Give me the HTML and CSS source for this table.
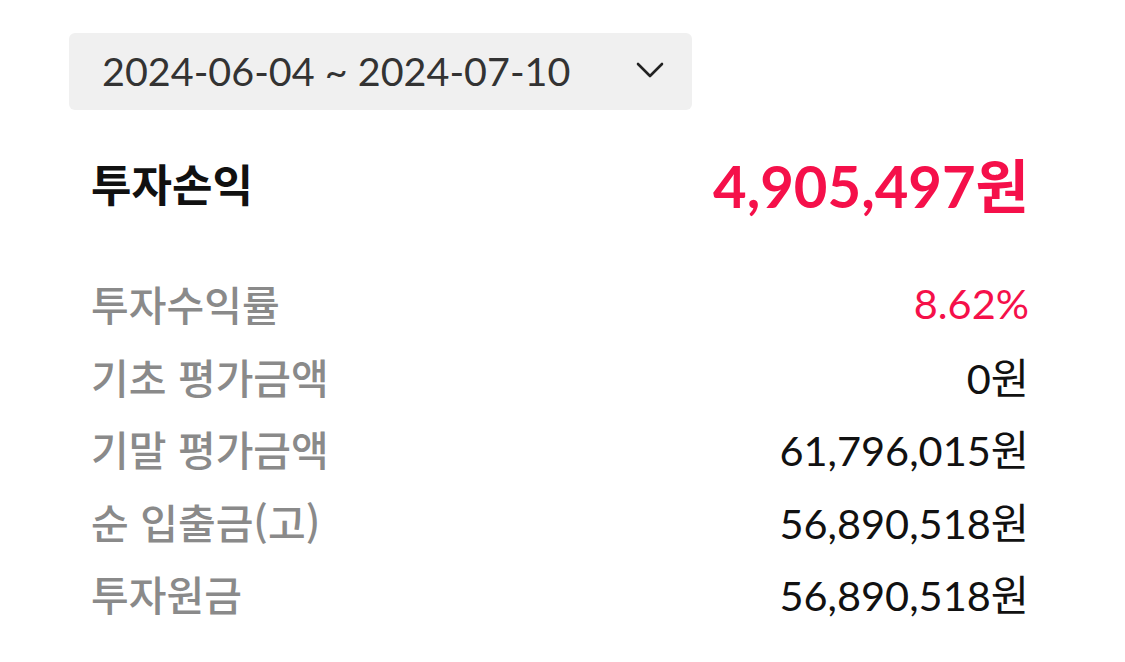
FILE: index.html
```html
<!DOCTYPE html>
<html lang="ko">
<head>
    <meta charset="UTF-8">
    <meta name="viewport" content="width=device-width, initial-scale=1.0">
    <title>투자손익</title>
    <link rel="stylesheet" href="styles.css">
</head>
<body>
    <div class="container">
        <div class="period-select">
            <span class="period-text">2024-06-04 ~ 2024-07-10</span>
            <svg class="chevron" width="28" height="16" viewBox="0 0 28 16">
                <polyline points="2,2 14,14 26,2" fill="none" stroke="#222" stroke-width="2.6" stroke-linecap="round" stroke-linejoin="round"/>
            </svg>
        </div>

        <div class="summary">
            <div class="total-row">
                <span class="total-label">투자손익</span>
                <span class="total-value">4,905,497원</span>
            </div>

            <div class="detail-list">
                <div class="detail-row">
                    <span class="detail-label">투자수익률</span>
                    <span class="detail-value up">8.62%</span>
                </div>
                <div class="detail-row">
                    <span class="detail-label">기초 평가금액</span>
                    <span class="detail-value">0원</span>
                </div>
                <div class="detail-row">
                    <span class="detail-label">기말 평가금액</span>
                    <span class="detail-value">61,796,015원</span>
                </div>
                <div class="detail-row">
                    <span class="detail-label">순 입출금(고)</span>
                    <span class="detail-value">56,890,518원</span>
                </div>
                <div class="detail-row">
                    <span class="detail-label">투자원금</span>
                    <span class="detail-value">56,890,518원</span>
                </div>
            </div>
        </div>
    </div>
</body>
</html>
```

FILE: styles.css
```css
body {
    margin: 0;
    background-color: #fff;
    font-family: Lato, "Noto Sans CJK KR", sans-serif;
    color: #111;
}
.container {
    width: 980px;
    margin-left: 69px;
    padding-top: 33px;
}
.period-select {
    width: 623px;
    height: 77px;
    box-sizing: border-box;
    padding: 0 28px 3px 33px;
    display: flex;
    align-items: center;
    justify-content: space-between;
    background-color: #f0f0f0;
    border-radius: 6px;
}
.period-text {
    font-size: 39.5px;
    color: #333;
}
.summary {
    padding: 0 20px 0 22px;
}
.total-row {
    display: flex;
    justify-content: space-between;
    align-items: center;
    height: 74px;
    margin-top: 36px;
}
.total-label {
    font-family: "Noto Sans CJK KR", sans-serif;
    font-size: 44px;
    font-weight: 700;
}
.total-value {
    font-size: 58px;
    font-weight: 700;
    color: #f5104a;
}
.detail-list {
    margin-top: 47px;
}
.detail-row {
    display: flex;
    justify-content: space-between;
    align-items: center;
    height: 72.5px;
}
.detail-label {
    font-family: "Noto Sans CJK KR", sans-serif;
    font-size: 41px;
    font-weight: 500;
    color: #8a8a8a;
}
.detail-value {
    font-size: 41.5px;
}
.detail-value.up {
    color: #f5104a;
}
```
